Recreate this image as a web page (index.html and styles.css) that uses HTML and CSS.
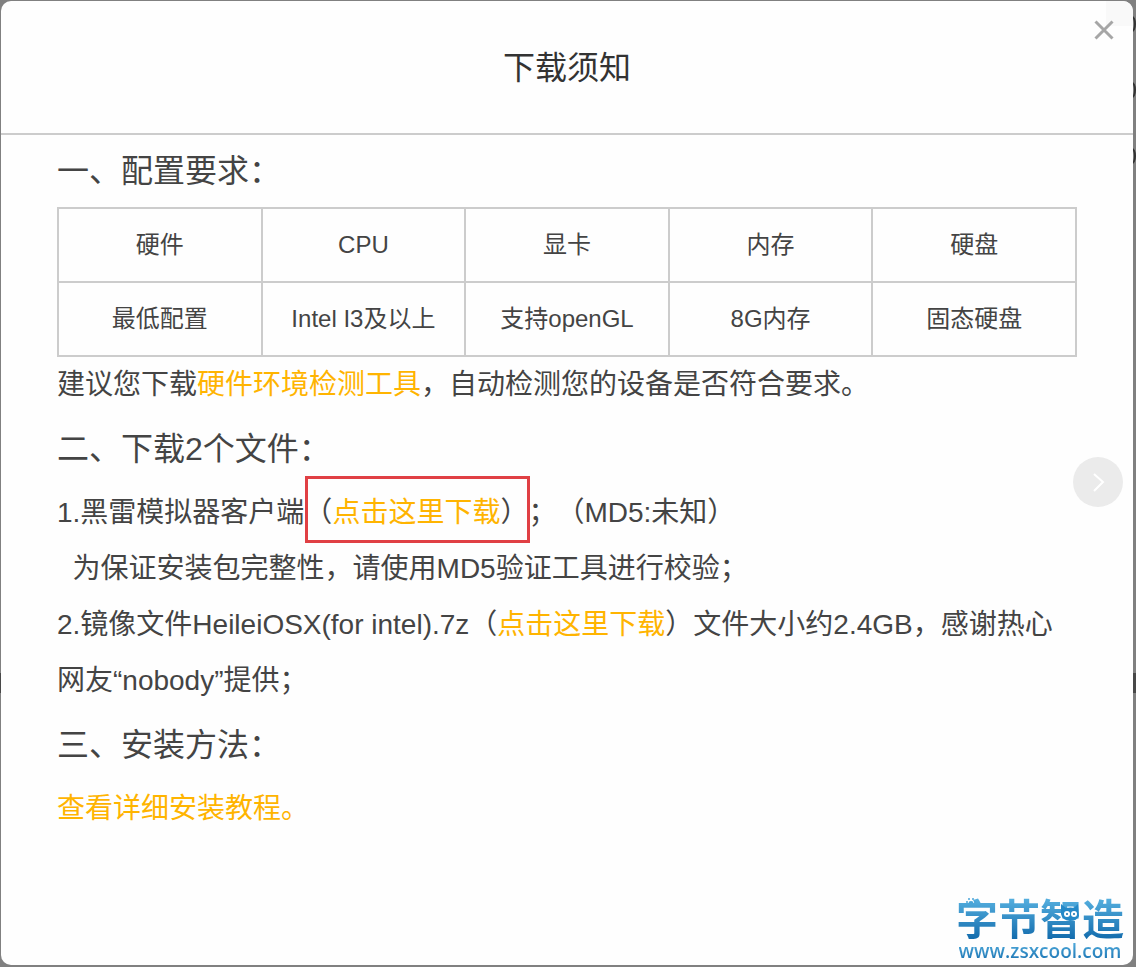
FILE: index.html
```html
<!DOCTYPE html>
<html lang="zh-CN">
<head>
<meta charset="utf-8">
<meta name="viewport" content="width=device-width, initial-scale=1">
<title>下载须知</title>
<link rel="stylesheet" href="styles.css">
</head>
<body>
<div class="backdrop">
  <span class="mark mark-a"></span>
  <span class="mark mark-b"></span>
  <span class="mark mark-c"></span>
  <span class="band"></span>
  <main class="dialog">
    <header class="dialog-header">
      <h1 class="title">下载须知</h1>
    </header>
    <span class="corner"></span>
    <button class="close" type="button" aria-label="关闭">
      <svg viewBox="0 0 20 20" width="20" height="20"><path d="M1.5 1.5L18.5 18.5M18.5 1.5L1.5 18.5" fill="none" stroke="#a6a6a6" stroke-width="3"/></svg>
    </button>
    <div class="content">
      <h2 class="section">一、配置要求：</h2>
      <table class="specs">
        <tr><th>硬件</th><th>CPU</th><th>显卡</th><th>内存</th><th>硬盘</th></tr>
        <tr><td>最低配置</td><td>Intel I3及以上</td><td>支持openGL</td><td>8G内存</td><td>固态硬盘</td></tr>
      </table>
      <p class="text">建议您下载<a class="link" href="#">硬件环境检测工具</a>，自动检测您的设备是否符合要求。</p>
      <h2 class="section">二、下载2个文件：</h2>
      <p class="text">1.黑雷模拟器客户端<span class="marked">（<a class="link" href="#">点击这里下载</a>）</span>；（MD5:未知）</p>
      <p class="text">&nbsp;&nbsp;为保证安装包完整性，请使用MD5验证工具进行校验；</p>
      <p class="text">2.镜像文件HeileiOSX(for intel).7z（<a class="link" href="#">点击这里下载</a>）文件大小约2.4GB，感谢热心网友“nobody”提供；</p>
      <h2 class="section">三、安装方法：</h2>
      <p class="text"><a class="link" href="#">查看详细安装教程。</a></p>
    </div>
    <button class="next" type="button" aria-label="下一张">
      <svg viewBox="0 0 50 50" width="50" height="50"><path d="M21 17L30 25L21 34" fill="none" stroke="#fff" stroke-width="2"/></svg>
    </button>
    <div class="brand">
      <span class="brand-name">字节智造</span>
      <span class="brand-url">www.zsxcool.com</span>
      <svg class="brand-art" viewBox="0 0 172 68" width="172" height="68">
        <g fill="#4aa5d8"><circle cx="13" cy="7" r="1"/><circle cx="15" cy="4" r="1"/><circle cx="19" cy="4" r="1"/><circle cx="21" cy="7" r="1"/><ellipse cx="17" cy="8" rx="2.5" ry="2"/></g>
        <path d="M107 9L112 13Q117 12 120 13L124 9L125 21Q123 26 116 26Q108 25 107 19Z" fill="#2589c8"/>
        <circle cx="113" cy="19" r="3" fill="#fff"/><circle cx="120" cy="19" r="3" fill="#fff"/>
        <circle cx="113" cy="19" r="1" fill="#176eaa"/><circle cx="120" cy="19" r="1" fill="#176eaa"/>
      </svg>
    </div>
  </main>
</div>
</body>
</html>
```
FILE: styles.css
```css
* { box-sizing: border-box; }
body {
  margin: 0;
  color: #444;
  font-family: "Liberation Sans", "Noto Sans CJK SC", sans-serif;
  text-spacing-trim: space-all;
}
.backdrop {
  position: relative;
  display: flex;
  min-height: 100vh;
  padding: 1px 3px 2px 1px;
  background: #808080;
  overflow: hidden;
}
.mark {
  position: absolute;
  right: 0;
  width: 8px;
  height: 16px;
  border: 2px solid #333;
  border-radius: 50%;
}
.mark-a { top: 16px; }
.mark-b { top: 82px; }
.mark-c { top: 148px; }
.band {
  position: absolute;
  top: 673px;
  left: 0;
  right: 0;
  height: 20px;
  background: #484848;
}
.dialog {
  position: relative;
  flex: 1;
  background: #fefefe;
  border-radius: 10px;
  overflow: hidden;
}
.dialog-header {
  padding: 43px 56px 41px;
  border-bottom: 2px solid #ccc;
}
.title {
  margin: 0;
  font-size: 32px;
  line-height: 48px;
  font-weight: 400;
  text-align: center;
  color: #333;
}
.corner {
  position: absolute;
  top: 0;
  right: 0;
  width: 27px;
  height: 25px;
  background: #f9f9f9;
}
.close, .next {
  position: absolute;
  display: flex;
  padding: 0;
  border: 0;
  background: none;
  cursor: pointer;
}
.close { top: 19px; right: 19px; }
.next {
  top: 456px;
  right: 10px;
  border-radius: 50%;
  background: #ebebeb;
}
.content { padding: 0 56px; }
.section {
  margin: 0;
  font-size: 32px;
  line-height: 72px;
  font-weight: 400;
}
.specs {
  width: 100%;
  table-layout: fixed;
  border-collapse: collapse;
}
.specs th, .specs td {
  height: 74px;
  padding: 0;
  border: 2px solid #ccc;
  font-size: 24px;
  font-weight: 400;
  line-height: 36px;
  text-align: center;
}
.text {
  margin: 0;
  font-size: 28px;
  line-height: 56px;
}
.link {
  color: #ffb400;
  text-decoration: none;
}
.marked { position: relative; }
.marked::after {
  content: "";
  position: absolute;
  inset: -21px -2px -15px 1px;
  border: 3px solid #e04044;
}
.brand {
  position: absolute;
  right: 7px;
  bottom: 2px;
  display: flex;
  flex-direction: column;
  align-items: center;
  width: 172px;
}
.brand-name, .brand-url {
  color: transparent;
  background: linear-gradient(#5bb5e3, #136cad);
  background-clip: text;
  -webkit-background-clip: text;
}
.brand-name {
  font-family: "Noto Sans CJK SC", sans-serif;
  font-size: 42px;
  font-weight: 700;
  line-height: 44px;
}
.brand-url {
  font-family: "Open Sans", sans-serif;
  font-size: 19px;
  font-weight: 600;
  line-height: 24px;
}
.brand-art {
  position: absolute;
  top: 0;
  left: 0;
}
```
